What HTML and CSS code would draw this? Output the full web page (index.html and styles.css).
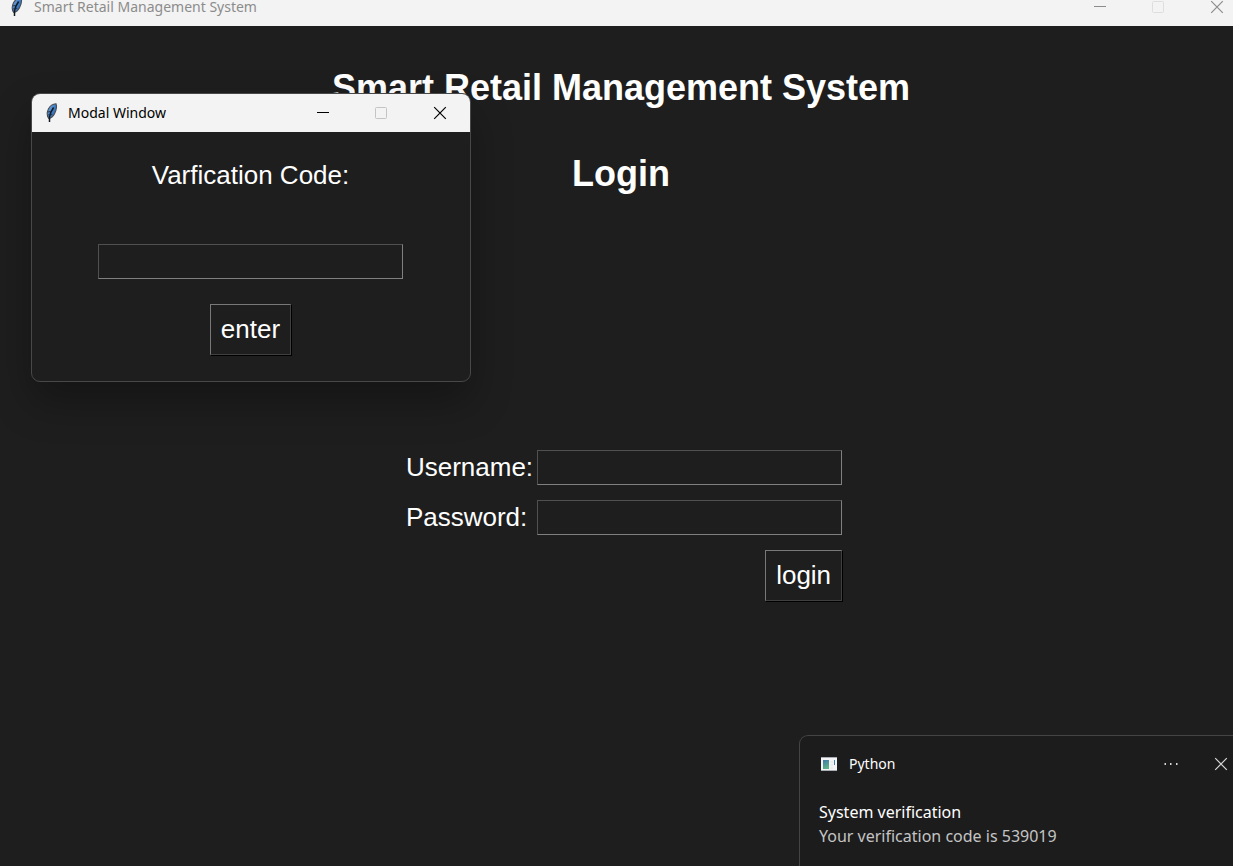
FILE: index.html
```html
<!DOCTYPE html>
<html lang="en">
<head>
<meta charset="utf-8">
<meta name="viewport" content="width=device-width, initial-scale=1">
<title>Smart Retail Management System</title>
<link rel="stylesheet" href="styles.css">
</head>
<body>
<svg class="defs" aria-hidden="true">
  <defs>
    <linearGradient id="vane" x1="0" y1="0" x2="1" y2="1">
      <stop offset="0" stop-color="#8fb8e6"/>
      <stop offset="0.5" stop-color="#3f7fc8"/>
      <stop offset="1" stop-color="#2a5c9c"/>
    </linearGradient>
    <linearGradient id="pane" x1="0" y1="0" x2="0.4" y2="1">
      <stop offset="0" stop-color="#3f78ad"/>
      <stop offset="1" stop-color="#5fb287"/>
    </linearGradient>
    <symbol id="feather" viewBox="0 0 14 20">
      <path d="M3.800 15.500C1.800 13 1.800 9.500 3.400 6C5 3 7.500 1 11 .8C12 3.500 11.300 7.500 9.400 11C8 13.500 6.200 15 3.800 15.500Z" fill="url(#vane)" stroke="#4a4d52" stroke-width="1.100"/>
      <path d="M8.600 4.500C6.800 7 5 10.500 4.500 14V19" fill="none" stroke="#111820" stroke-width="1.500"/>
      <path d="M3 12.500L4.500 11M2.800 9L5.500 8.500M7 12L6 10.500" stroke="#16202c" stroke-width=".8"/>
    </symbol>
    <symbol id="minimize" viewBox="0 0 14 14"><path d="M0 6.500H12" stroke="currentColor"/></symbol>
    <symbol id="maximize" viewBox="0 0 14 14"><rect x=".5" y="1.500" width="11" height="11" rx="1" fill="none" stroke="currentColor"/></symbol>
    <symbol id="close" viewBox="0 0 14 14"><path d="M1.200 1.200L12.800 12.800M12.800 1.200L1.200 12.800" stroke="currentColor" stroke-width="1.200"/></symbol>
    <symbol id="more" viewBox="0 0 14 14"><path d="M.5 6H2v2H.5zM6 6h1.500v2H6zM12 6h1.500v2H12z" fill="currentColor"/></symbol>
  </defs>
</svg>

<div class="desktop">
  <header class="titlebar titlebar-main">
    <svg class="feather" aria-hidden="true"><use href="#feather"/></svg>
    <span class="titlebar-text">Smart Retail Management System</span>
    <div class="controls">
      <button class="control" aria-label="Minimize"><svg class="glyph"><use href="#minimize"/></svg></button>
      <button class="control" aria-label="Maximize" disabled><svg class="glyph"><use href="#maximize"/></svg></button>
      <button class="control" aria-label="Close"><svg class="glyph"><use href="#close"/></svg></button>
    </div>
  </header>

  <main class="content">
    <h1 class="heading">Smart Retail Management System</h1>
    <h2 class="heading">Login</h2>
    <form class="login">
      <label class="label" for="username">Username:</label>
      <input class="entry" id="username" type="text">
      <label class="label" for="password">Password:</label>
      <input class="entry" id="password" type="password">
      <button class="button submit" type="button">login</button>
    </form>
  </main>

  <section class="modal" role="dialog" aria-labelledby="modal-title">
    <header class="titlebar titlebar-modal">
      <svg class="feather" aria-hidden="true"><use href="#feather"/></svg>
      <span class="titlebar-text" id="modal-title">Modal Window</span>
      <div class="controls">
        <button class="control" aria-label="Minimize"><svg class="glyph"><use href="#minimize"/></svg></button>
        <button class="control" aria-label="Maximize" disabled><svg class="glyph"><use href="#maximize"/></svg></button>
        <button class="control" aria-label="Close"><svg class="glyph"><use href="#close"/></svg></button>
      </div>
    </header>
    <form class="verify">
      <label class="label" for="code">Varfication Code:</label>
      <input class="entry" id="code" type="text">
      <button class="button" type="button">enter</button>
    </form>
  </section>

  <aside class="toast">
    <div class="toast-head">
      <svg class="app-icon" viewBox="0 0 16 14" aria-hidden="true">
        <rect width="16" height="14" fill="#f4f4f6"/>
        <path d="M0 .5H16M0 13.500H16" stroke="#a9adb5"/>
        <rect x="2" y="3" width="6" height="9" fill="url(#pane)"/>
        <path d="M9.500 5H12M9.500 8H12M9.500 11H12" stroke="#e0e2e6"/>
        <rect x="13" y="3" width="1" height="5" fill="#3c82a8"/>
      </svg>
      <span class="toast-app">Python</span>
      <button class="control" aria-label="More options"><svg class="glyph"><use href="#more"/></svg></button>
      <button class="control" aria-label="Dismiss"><svg class="glyph"><use href="#close"/></svg></button>
    </div>
    <p class="toast-title">System verification</p>
    <p class="toast-text">Your verification code is 539019</p>
  </aside>
</div>
</body>
</html>
```
FILE: styles.css
```css
* { box-sizing: border-box; }

body {
  margin: 0;
  background: #1e1e1e;
  color: #fff;
  font-family: "Liberation Sans", Arial, sans-serif;
}

.defs { position: absolute; width: 0; height: 0; }

.desktop {
  position: relative;
  min-height: 100vh;
  overflow: hidden;
}

/* Window title bars */
.titlebar {
  display: flex;
  align-items: center;
  background: #f3f3f3;
  color: #000;
  font: 14px/14px "Noto Sans", "Open Sans", sans-serif;
}

.titlebar-main {
  height: 26px;
  padding: 0 9px 12px 10px;
  color: #8c8c8c;
}

.titlebar-modal {
  height: 38px;
  padding: 0 23px 0 13px;
}

.feather { width: 14px; height: 20px; margin-right: 10px; }
.titlebar-modal .feather { margin-right: 9px; }

.controls {
  display: flex;
  gap: 44px;
  margin-left: auto;
}

.control {
  display: flex;
  padding: 0;
  border: 0;
  background: none;
  color: inherit;
}

.control:disabled { color: #c4c4c4; }
.titlebar-main .control:disabled { color: #dedede; }
.glyph { width: 14px; height: 14px; }

/* Main window */
.content {
  display: flex;
  flex-direction: column;
  align-items: center;
  padding: 41px 0 0 9px;
}

.heading {
  margin: 0 0 44px;
  font-size: 36px;
  line-height: 42px;
}

.label { font-size: 26px; line-height: 35px; }

.entry {
  width: 305px;
  height: 35px;
  padding: 0 4px;
  border: 1px solid;
  border-color: #505050 #808080 #808080 #505050;
  background: #1e1e1e;
  color: #fff;
  font: 26px "Liberation Sans", Arial, sans-serif;
}

.button {
  height: 51px;
  padding: 0 10px;
  border: 1px solid;
  border-color: #787878 #404040 #404040 #787878;
  background: #1e1e1e;
  box-shadow: 1px 1px 0 #000;
  color: #fff;
  font: 26px "Liberation Sans", Arial, sans-serif;
}

.login {
  display: grid;
  grid-template-columns: auto auto;
  row-gap: 15px;
  margin-top: 211px;
}

.login .label { padding: 0 4px 0 6px; }
.submit { grid-column: 2; justify-self: end; }

/* Verification dialog */
.modal {
  position: absolute;
  top: 93px;
  left: 31px;
  width: 440px;
  overflow: hidden;
  border: 1px solid #484848;
  border-radius: 9px;
  background: #1e1e1e;
  box-shadow: 0 20px 40px rgba(0, 0, 0, 0.3);
}

.verify {
  display: flex;
  flex-direction: column;
  align-items: center;
  padding: 26px 1px 26px 0;
}

.verify .entry { margin: 51px 0 25px; }

/* Notification */
.toast {
  position: absolute;
  right: 0;
  bottom: 0;
  width: 434px;
  padding: 16px 5px 18px 19px;
  border: 1px solid #444;
  border-width: 1px 0 0 1px;
  border-radius: 9px 0 0;
  background: #1c1c1c;
  font: 16px/24px "Noto Sans", "Open Sans", sans-serif;
}

.toast-head {
  display: flex;
  align-items: center;
  gap: 36px;
  margin-bottom: 24px;
  padding-left: 2px;
  font-size: 14px;
}

.toast-head .control { color: #d8d8d8; }
.app-icon { width: 16px; height: 14px; margin-right: -24px; }
.toast-app { margin-right: auto; }
.toast p { margin: 0; }
.toast .toast-text { color: #c4c4c4; }
```
